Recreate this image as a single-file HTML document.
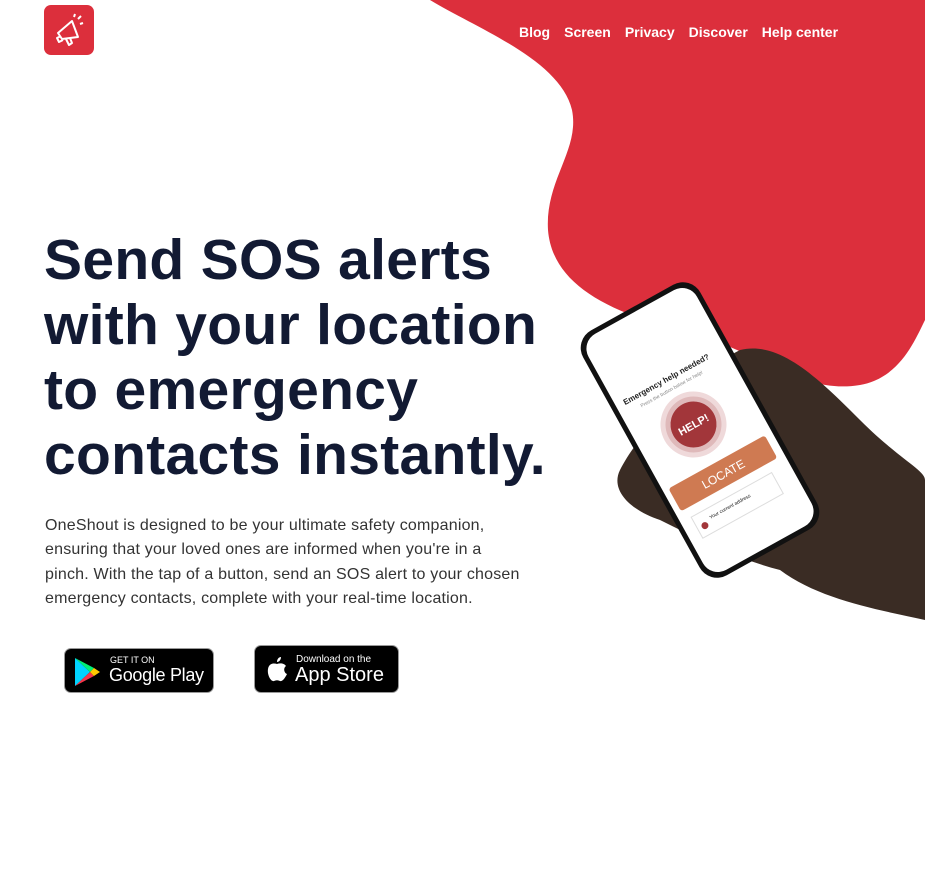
<!DOCTYPE html>
<html><head><meta charset="utf-8"><style>
*{margin:0;padding:0;box-sizing:border-box}
body{width:925px;height:874px;background:#fff;font-family:"Liberation Sans",sans-serif;position:relative;overflow:hidden}
.nav{position:absolute;top:24px;left:519px;display:flex;gap:14px;color:#fff;font-weight:bold;font-size:14px}
.logo{position:absolute;left:44px;top:5px;width:50px;height:50px;background:#dc2f3c;border-radius:7px}
h1{position:absolute;left:44px;top:228px;font-size:57px;line-height:65px;font-weight:bold;color:#121a33;letter-spacing:0.3px}
p{position:absolute;left:45px;top:514px;width:560px;font-size:16px;line-height:24.3px;color:#333;letter-spacing:0.2px;white-space:nowrap}
.badge{position:absolute;background:#000;border:1px solid #999;border-radius:7px;color:#fff}
</style></head><body>
<svg style="position:absolute;left:0;top:0" width="925" height="874">
<path d="M430 0 C480 30 560 60 572 110 C580 150 545 180 548 230 C552 280 600 310 680 330 C760 350 800 395 860 385 C900 378 915 340 925 320 L925 0 Z" fill="#dc2f3c"/>
<path d="M620 470 C640 430 700 370 740 350 C780 340 820 380 860 420 C900 460 925 470 925 480 L925 620 C880 610 820 600 780 570 C740 560 700 540 660 520 C630 510 610 490 620 470 Z" fill="#3a2c24"/>
<g transform="translate(700,430) rotate(-29)">
<rect x="-67" y="-140" width="134" height="280" rx="20" fill="#111"/>
<rect x="-62" y="-135" width="124" height="270" rx="17" fill="#fff"/>
<text x="-5" y="-58" font-size="8" font-weight="bold" text-anchor="middle" fill="#222">Emergency help needed?</text>
<text x="-5" y="-48" font-size="5" text-anchor="middle" fill="#888">Press the button below for help!</text>
<circle cx="-3" cy="-8" r="33" fill="#efd9da"/>
<circle cx="-3" cy="-8" r="28" fill="#dfb9ba"/>
<circle cx="-3" cy="-8" r="23" fill="#a2363a"/>
<text x="-3" y="-4" font-size="11" font-weight="bold" text-anchor="middle" fill="#fff">HELP!</text>
<rect x="-56" y="36" width="110" height="26" rx="3" fill="#cf7a52"/>
<text x="-1" y="54" font-size="12" text-anchor="middle" fill="#fff">LOCATE</text>
<rect x="-50" y="72" width="92" height="24" fill="#fff" stroke="#ddd"/>
<circle cx="-42" cy="86" r="3.5" fill="#a2363a"/>
<text x="-34" y="83" font-size="5" fill="#222">Your current address</text>
</g>
</svg>
<div class="logo"><svg width="50" height="50" viewBox="0 0 50 50" fill="none" stroke="#fff" stroke-width="2" stroke-linejoin="round"><path d="M14 28 L28 16 L34 32 L18 34 Z M17 31 L13 33 L15 37 L19 35 M22 34 L25 40 L28 38 L26 33 M30 12 L31 9 M34 14 L37 11 M36 19 L39 18"/></svg></div>
<div class="nav"><span>Blog</span><span>Screen</span><span>Privacy</span><span>Discover</span><span>Help center</span></div>
<h1>Send SOS alerts<br>with your location<br>to emergency<br>contacts instantly.</h1>
<p>OneShout is designed to be your ultimate safety companion,<br>ensuring that your loved ones are informed when you're in a<br>pinch. With the tap of a button, send an SOS alert to your chosen<br>emergency contacts, complete with your real-time location.</p>
<div class="badge" style="left:64px;top:648px;width:150px;height:45px">
<svg style="position:absolute;left:8px;top:8px" width="28" height="30" viewBox="0 0 28 30"><path d="M2 1 L17 15 L2 29 Z" fill="#00d3ff"/><path d="M2 1 L21 11 L17 15 Z" fill="#00f076"/><path d="M2 29 L21 19 L17 15 Z" fill="#f4364a"/><path d="M21 11 L27 15 L21 19 L17 15 Z" fill="#ffc900"/></svg>
<div style="position:absolute;left:45px;top:6px;font-size:9px">GET IT ON</div>
<div style="position:absolute;left:44px;top:16px;font-size:18px;letter-spacing:-0.3px">Google Play</div></div>
<div class="badge" style="left:254px;top:645px;width:145px;height:48px">
<svg style="position:absolute;left:10px;top:9px" width="24" height="28" viewBox="0 0 24 28"><path d="M16 2 C16 5 14 7 12 7 C12 4 14 2 16 2 Z M12 9 C9 8 4 8 3 14 C2 20 6 27 9 26 C11 25 13 25 15 26 C18 27 21 21 22 19 C19 18 18 13 21 11 C19 8 15 8 12 9 Z" fill="#fff"/></svg>
<div style="position:absolute;left:41px;top:8px;font-size:10px">Download on the</div>
<div style="position:absolute;left:40px;top:18px;font-size:20px">App Store</div></div>
</body></html>
